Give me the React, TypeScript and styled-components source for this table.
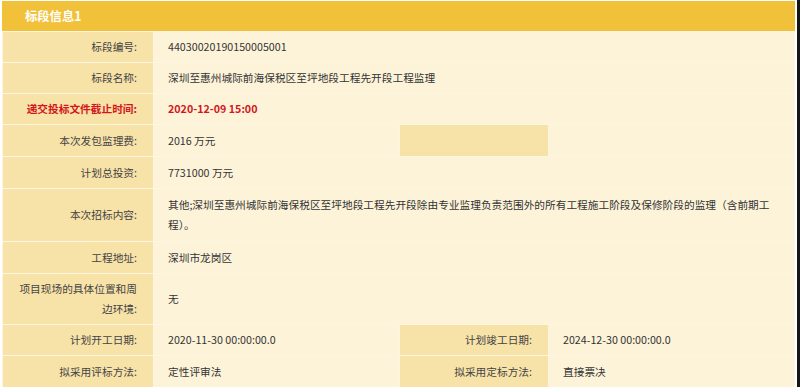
import styled, { createGlobalStyle } from "styled-components";

const GlobalStyle = createGlobalStyle`
  html, body {
    margin: 0;
    padding: 0;
    background: #ffffff;
  }
  body {
    font-family: "Noto Sans CJK SC", "Noto Sans", sans-serif;
  }
`

const Frame = styled.div`
  box-sizing: border-box;
  width: 800px;
  min-height: 100vh;
  padding: 1px 2px 0 2px;
  border-right: 3px solid #161616;
`

const Panel = styled.section`
  width: 793px;
  background: #fcf5e2;
`

const Header = styled.div`
  height: 30px;
  background: #f2c13a;
  color: #ffffff;
  font-size: 12.3px;
  font-weight: 700;
  line-height: 30px;
  padding-left: 23px;
`

const Table = styled.table`
  width: 793px;
  table-layout: fixed;
  border-collapse: separate;
  border-spacing: 1px;
  font-size: 10.7px;
  line-height: 20px;
`

const Row = styled.tr<{ $tall?: number }>`
  height: ${(p) => (p.$tall ? p.$tall : 30)}px;
`

const LabelCell = styled.td<{ $alert?: boolean }>`
  background: #f7e2a8;
  text-align: right;
  padding: 0 16px 0 12px;
  color: ${(p) => (p.$alert ? "#d3161c" : "#444444")};
  font-weight: ${(p) => (p.$alert ? 700 : 400)};
  vertical-align: middle;
`

const ValueCell = styled.td<{ $alert?: boolean }>`
  background: #fdf3d9;
  text-align: left;
  padding: 0 22px 0 14px;
  color: ${(p) => (p.$alert ? "#d3161c" : "#333333")};
  font-weight: ${(p) => (p.$alert ? 700 : 400)};
  vertical-align: middle;
`

export default function App() {
  return (
    <Frame>
      <GlobalStyle />
      <Panel>
        <Header>标段信息1</Header>
        <Table>
          <colgroup>
            <col style={{ width: 150 }} />
            <col style={{ width: 245 }} />
            <col style={{ width: 148 }} />
            <col style={{ width: 245 }} />
          </colgroup>
          <tbody>
            <Row>
              <LabelCell>标段编号:</LabelCell>
              <ValueCell colSpan={3}>44030020190150005001</ValueCell>
            </Row>
            <Row>
              <LabelCell>标段名称:</LabelCell>
              <ValueCell colSpan={3}>深圳至惠州城际前海保税区至坪地段工程先开段工程监理</ValueCell>
            </Row>
            <Row>
              <LabelCell $alert>递交投标文件截止时间:</LabelCell>
              <ValueCell $alert colSpan={3}>2020-12-09 15:00</ValueCell>
            </Row>
            <Row $tall={31}>
              <LabelCell>本次发包监理费:</LabelCell>
              <ValueCell>2016 万元</ValueCell>
              <LabelCell />
              <ValueCell />
            </Row>
            <Row $tall={31}>
              <LabelCell>计划总投资:</LabelCell>
              <ValueCell colSpan={3}>7731000 万元</ValueCell>
            </Row>
            <Row $tall={52}>
              <LabelCell>本次招标内容:</LabelCell>
              <ValueCell colSpan={3}>
                其他;深圳至惠州城际前海保税区至坪地段工程先开段除由专业监理负责范围外的所有工程施工阶段及保修阶段的监理（含前期工程）。
              </ValueCell>
            </Row>
            <Row $tall={31}>
              <LabelCell>工程地址:</LabelCell>
              <ValueCell colSpan={3}>深圳市龙岗区</ValueCell>
            </Row>
            <Row $tall={50}>
              <LabelCell>项目现场的具体位置和周边环境:</LabelCell>
              <ValueCell colSpan={3}>无</ValueCell>
            </Row>
            <Row>
              <LabelCell>计划开工日期:</LabelCell>
              <ValueCell>2020-11-30 00:00:00.0</ValueCell>
              <LabelCell>计划竣工日期:</LabelCell>
              <ValueCell>2024-12-30 00:00:00.0</ValueCell>
            </Row>
            <Row $tall={32}>
              <LabelCell>拟采用评标方法:</LabelCell>
              <ValueCell>定性评审法</ValueCell>
              <LabelCell>拟采用定标方法:</LabelCell>
              <ValueCell>直接票决</ValueCell>
            </Row>
          </tbody>
        </Table>
      </Panel>
    </Frame>
  );
}
